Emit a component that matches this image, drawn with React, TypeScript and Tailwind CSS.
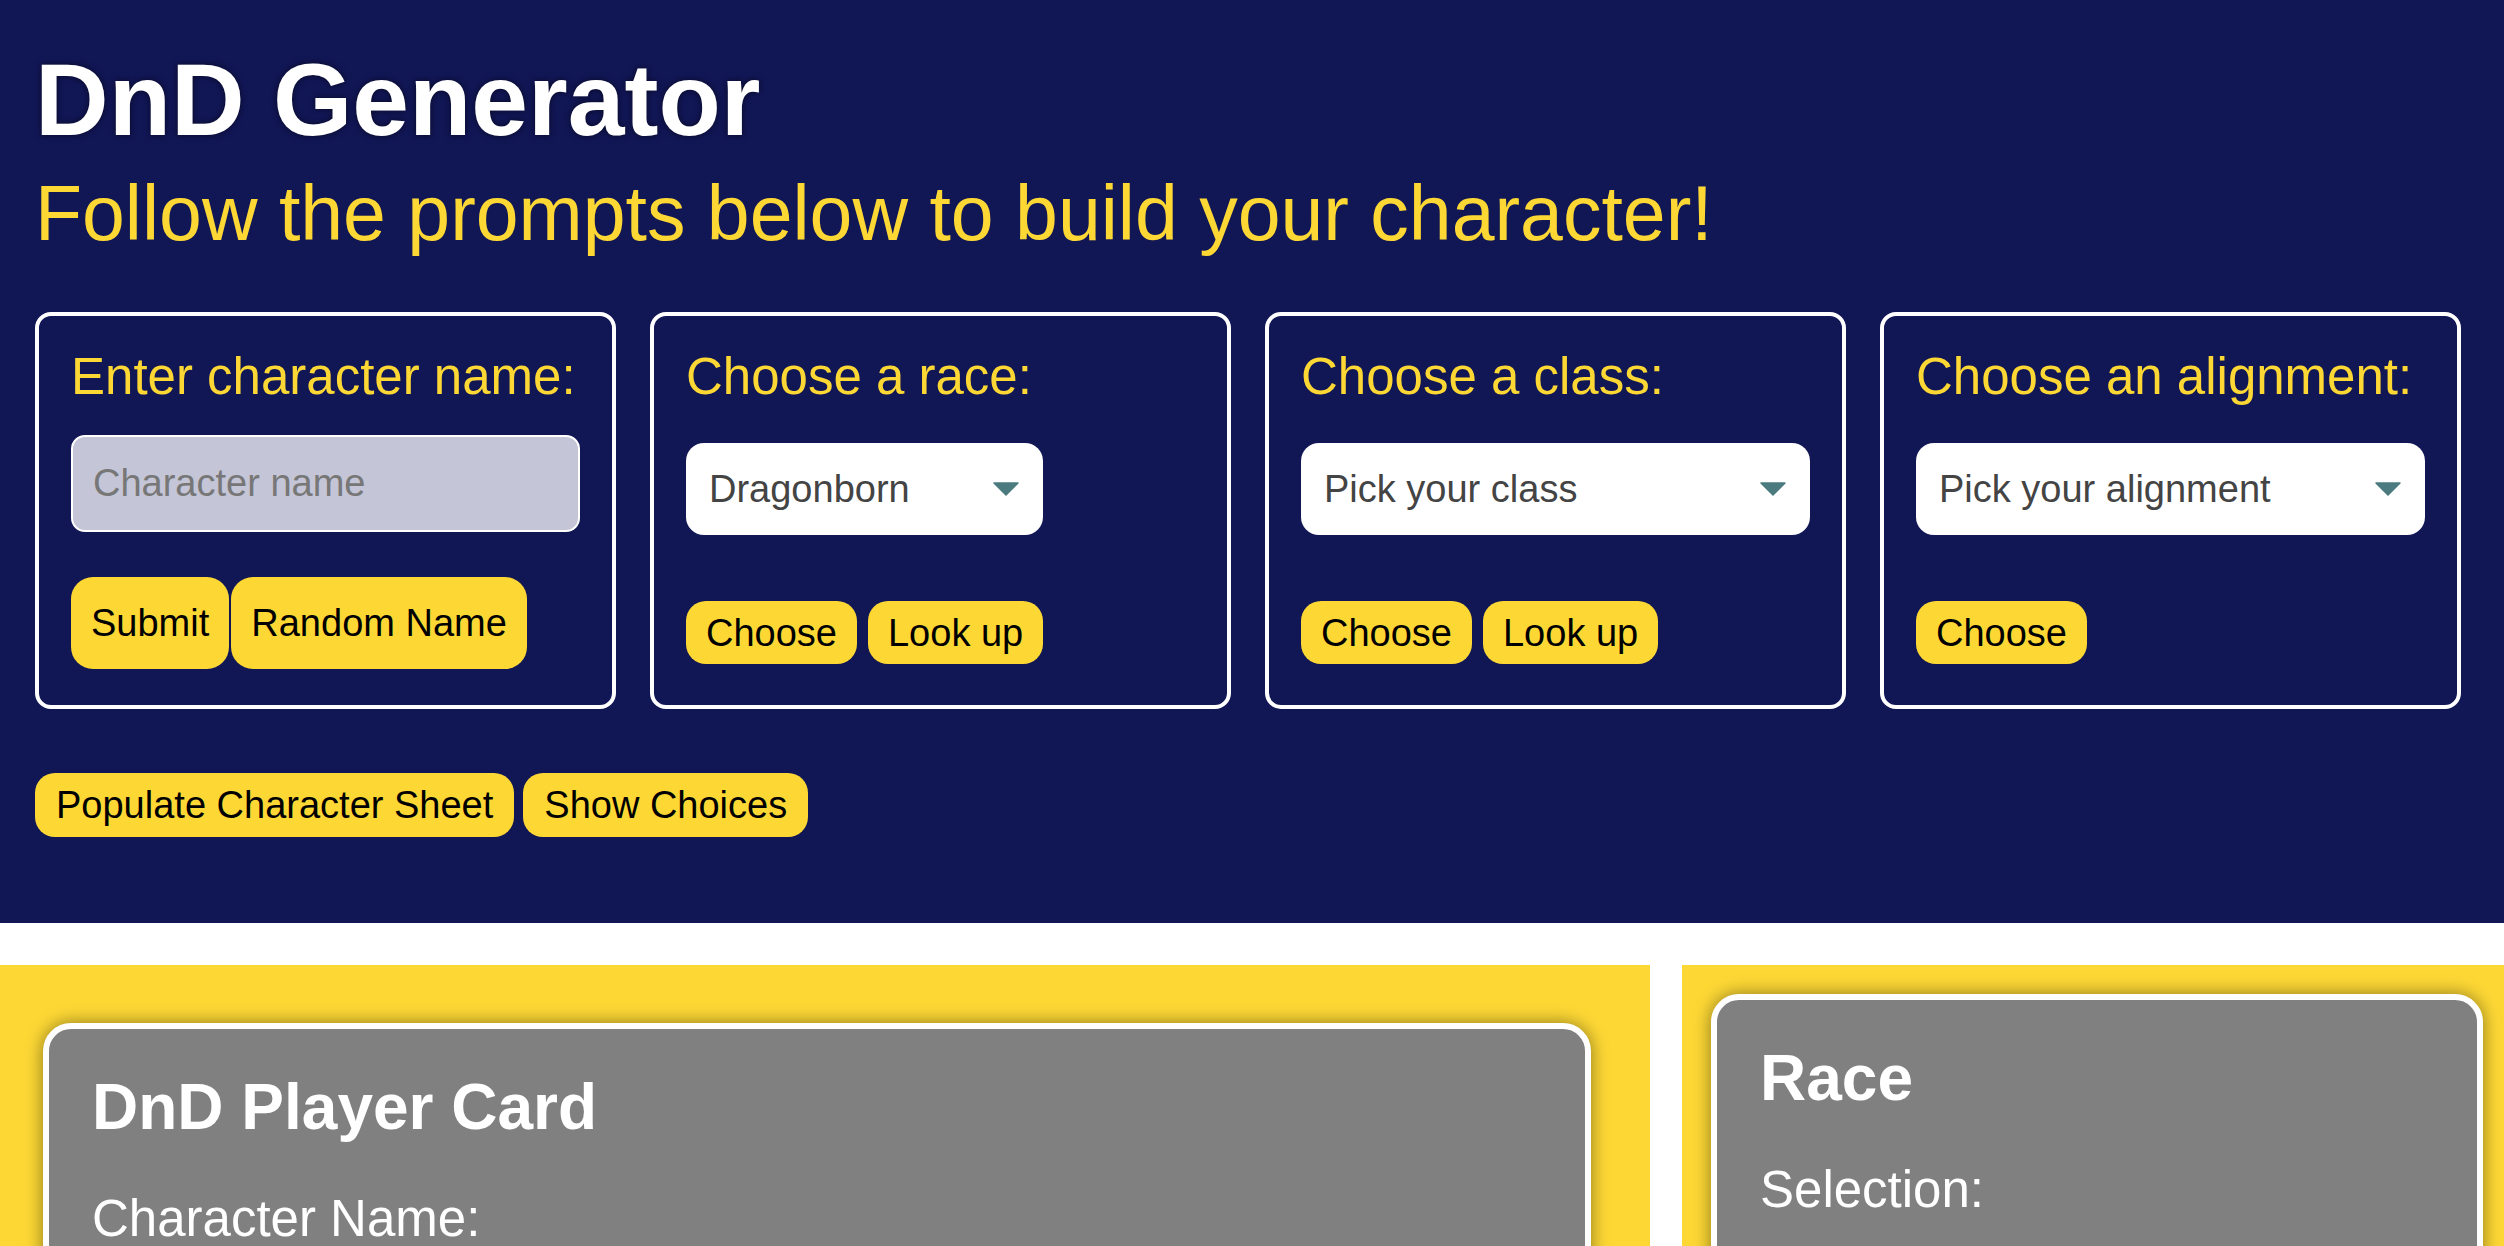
import { useState } from "react";

const races = ["Dragonborn", "Dwarf", "Elf", "Gnome", "Half-Elf", "Halfling", "Half-Orc", "Human", "Tiefling"];
const classes = ["Pick your class", "Barbarian", "Bard", "Cleric", "Druid", "Fighter", "Monk", "Paladin", "Ranger", "Rogue", "Sorcerer", "Warlock", "Wizard"];
const alignments = ["Pick your alignment", "Lawful Good", "Neutral Good", "Chaotic Good", "Lawful Neutral", "True Neutral", "Chaotic Neutral", "Lawful Evil", "Neutral Evil", "Chaotic Evil"];

function Arrow() {
  return (
    <svg className="pointer-events-none absolute right-[24px] top-1/2 -translate-y-1/2" width="26" height="14" viewBox="0 0 26 14">
      <path d="M1 1 L25 1 L13 13 Z" fill="#4b7b7f" stroke="#4b7b7f" strokeWidth="1.5" strokeLinejoin="round" />
    </svg>
  );
}

function Picker({ options, value, onChange, width }: { options: string[]; value: string; onChange: (v: string) => void; width: string }) {
  return (
    <div className={`relative mt-[41px] ${width}`}>
      <select
        className="h-[92px] w-full appearance-none rounded-[18px] bg-white pl-[23px] pr-[60px] text-[38px] text-[#444] outline-none"
        value={value}
        onChange={(e) => onChange(e.target.value)}
      >
        {options.map((o) => (
          <option key={o}>{o}</option>
        ))}
      </select>
      <Arrow />
    </div>
  );
}

function SmallButton({ label }: { label: string }) {
  return <button className="h-[63px] rounded-[20px] bg-[#fdd835] px-[20px] text-[38px] leading-none text-black">{label}</button>;
}

export default function App() {
  const [race, setRace] = useState("Dragonborn");
  const [klass, setKlass] = useState("Pick your class");
  const [alignment, setAlignment] = useState("Pick your alignment");

  return (
    <div className="min-h-screen bg-white font-['Liberation_Sans',Arial,sans-serif]">
      <header className="bg-[#111655] pb-[86px] pl-[35px] pt-[49px]">
        <h1 className="text-[102px] font-bold leading-none text-white [text-shadow:0_0_6px_rgba(0,0,0,0.6)]">DnD Generator</h1>
        <h2 className="mt-[24px] text-[77px] leading-none text-[#fdd835]">Follow the prompts below to build your character!</h2>

        <div className="mt-[60px] flex gap-[34px]">
          <div className="h-[397px] w-[581px] rounded-[16px] border-4 border-white px-[32px] pt-[35px]">
            <h3 className="text-[51px] leading-none text-[#fdd835]">Enter character name:</h3>
            <input
              className="mt-[33px] h-[97px] w-full rounded-[14px] border-2 border-white bg-[#c4c5d6] px-[20px] text-[38px] text-[#333] outline-none placeholder:text-[#777]"
              placeholder="Character name"
            />
            <div className="mt-[45px] flex gap-[2px]">
              <button className="h-[92px] rounded-[22px] bg-[#fdd835] px-[20px] text-[38px] leading-none text-black">Submit</button>
              <button className="h-[92px] rounded-[22px] bg-[#fdd835] px-[20px] text-[38px] leading-none text-black">Random Name</button>
            </div>
          </div>

          <div className="h-[397px] w-[581px] rounded-[16px] border-4 border-white px-[32px] pt-[35px]">
            <h3 className="text-[51px] leading-none text-[#fdd835]">Choose a race:</h3>
            <Picker options={races} value={race} onChange={setRace} width="w-[357px]" />
            <div className="mt-[66px] flex gap-[11px]">
              <SmallButton label="Choose" />
              <SmallButton label="Look up" />
            </div>
          </div>

          <div className="h-[397px] w-[581px] rounded-[16px] border-4 border-white px-[32px] pt-[35px]">
            <h3 className="text-[51px] leading-none text-[#fdd835]">Choose a class:</h3>
            <Picker options={classes} value={klass} onChange={setKlass} width="w-full" />
            <div className="mt-[66px] flex gap-[11px]">
              <SmallButton label="Choose" />
              <SmallButton label="Look up" />
            </div>
          </div>

          <div className="h-[397px] w-[581px] rounded-[16px] border-4 border-white px-[32px] pt-[35px]">
            <h3 className="text-[51px] leading-none text-[#fdd835]">Choose an alignment:</h3>
            <Picker options={alignments} value={alignment} onChange={setAlignment} width="w-full" />
            <div className="mt-[66px] flex gap-[11px]">
              <SmallButton label="Choose" />
            </div>
          </div>
        </div>

        <div className="mt-[64px] flex gap-[9px]">
          <button className="h-[64px] rounded-[20px] bg-[#fdd835] px-[21px] text-[38px] leading-none text-black">Populate Character Sheet</button>
          <button className="h-[64px] rounded-[20px] bg-[#fdd835] px-[21px] text-[38px] leading-none text-black">Show Choices</button>
        </div>
      </header>

      <main className="mt-[42px] flex gap-[32px]">
        <section className="w-[1650px] shrink-0 bg-[#fdd835] pb-[60px] pl-[43px] pr-[59px] pt-[58px]">
          <div className="rounded-[28px] border-[6px] border-white bg-[#808080] px-[43px] pb-[60px] pt-[46px] text-white shadow-[0_0_18px_rgba(0,0,0,0.45)]">
            <h2 className="text-[64px] font-bold leading-none">DnD Player Card</h2>
            <p className="mt-[54px] text-[51px] leading-none">Character Name:</p>
            <p className="mt-[40px] text-[51px] leading-none">Race:</p>
            <p className="mt-[40px] text-[51px] leading-none">Class:</p>
            <p className="mt-[40px] text-[51px] leading-none">Alignment:</p>
          </div>
        </section>

        <section className="flex-1 bg-[#fdd835] pb-[60px] pl-[29px] pr-[21px] pt-[29px]">
          <div className="rounded-[28px] border-[6px] border-white bg-[#808080] px-[43px] pb-[60px] pt-[46px] text-white shadow-[0_0_18px_rgba(0,0,0,0.45)]">
            <h2 className="text-[64px] font-bold leading-none">Race</h2>
            <p className="mt-[54px] text-[51px] leading-none">Selection:</p>
            <p className="mt-[40px] text-[51px] leading-none">Description:</p>
            <p className="mt-[40px] text-[51px] leading-none">Traits:</p>
          </div>
        </section>
      </main>
    </div>
  );
}
